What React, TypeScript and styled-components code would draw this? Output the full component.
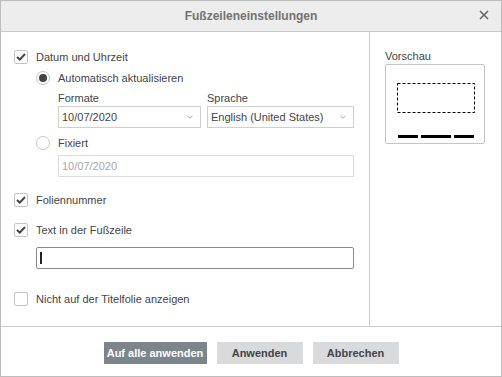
import { FC } from "react";
import styled, { createGlobalStyle } from "styled-components";

const GlobalStyle = createGlobalStyle`
	html, body {
		margin: 0;
		padding: 0;
		background: #ffffff;
	}

	* {
		box-sizing: border-box;
	}
`;

const Chevron: FC = () => (
	<svg width="6" height="4" viewBox="0 0 6 4">
		<path d="M0.5 0.8 L3 3.2 L5.5 0.8" fill="none" stroke="#a8a8a8" strokeWidth="1" />
	</svg>
);

const CheckMark: FC = () => (
	<svg width="10" height="8" viewBox="0 0 10 8">
		<path d="M1 4 L3.8 6.6 L9 1" fill="none" stroke="#444444" strokeWidth="2" />
	</svg>
);

const CheckBox: FC<{ checked?: boolean }> = ({ checked }) => (
	<Box>{checked && <CheckMark />}</Box>
);

const App: FC = () => {
	return (
		<>
			<GlobalStyle />
			<Window>
				<Header>
					<Title>Fußzeileneinstellungen</Title>
					<CloseButton>
						<svg width="10" height="10" viewBox="0 0 10 10">
							<path d="M1 1 L9 9 M9 1 L1 9" stroke="#666666" strokeWidth="1.6" />
						</svg>
					</CloseButton>
				</Header>
				<Main>
					<Settings>
						<Row>
							<CheckBox checked />
							<Label>Datum und Uhrzeit</Label>
						</Row>
						<Row $indent={22} $top={7}>
							<Radio $selected />
							<Label>Automatisch aktualisieren</Label>
						</Row>
						<Fields>
							<Field>
								<Caption>Formate</Caption>
								<Select $width={143}>
									<span>10/07/2020</span>
									<Chevron />
								</Select>
							</Field>
							<Field>
								<Caption>Sprache</Caption>
								<Select $width={147}>
									<span>English (United States)</span>
									<Chevron />
								</Select>
							</Field>
						</Fields>
						<Row $indent={22} $top={8}>
							<Radio />
							<Label>Fixiert</Label>
						</Row>
						<DisabledInput>10/07/2020</DisabledInput>
						<Row $top={16}>
							<CheckBox checked />
							<Label>Foliennummer</Label>
						</Row>
						<Row $top={16}>
							<CheckBox checked />
							<Label>Text in der Fußzeile</Label>
						</Row>
						<TextInput>
							<Caret />
						</TextInput>
						<Row $top={23}>
							<CheckBox />
							<Label>Nicht auf der Titelfolie anzeigen</Label>
						</Row>
					</Settings>
					<Preview>
						<Caption>Vorschau</Caption>
						<PreviewBox>
							<svg width="98" height="78" viewBox="0 0 98 78">
								<rect
									x="11.5"
									y="18.5"
									width="77"
									height="29"
									fill="none"
									stroke="#000000"
									strokeWidth="1"
									strokeDasharray="3 2"
								/>
								<rect x="12" y="70" width="20" height="3" fill="#000000" />
								<rect x="35" y="70" width="30" height="3" fill="#000000" />
								<rect x="68" y="70" width="20" height="3" fill="#000000" />
							</svg>
						</PreviewBox>
					</Preview>
				</Main>
				<Footer>
					<Button $primary>Auf alle anwenden</Button>
					<Button>Anwenden</Button>
					<Button>Abbrechen</Button>
				</Footer>
			</Window>
		</>
	);
};

export default App;

const Window = styled.div`
	width: 502px;
	height: 377px;
	display: flex;
	flex-direction: column;
	border: 1px solid #bdbdbd;
	background: #ffffff;
	font-family: "Liberation Sans", Arial, sans-serif;
	font-size: 11px;
	color: #444444;
`;

const Header = styled.div`
	position: relative;
	display: flex;
	align-items: center;
	justify-content: center;
	height: 31px;
	flex-shrink: 0;
	background: #ededed;
	border-bottom: 1px solid #cbcbcb;
`;

const Title = styled.div`
	font-size: 12px;
	font-weight: bold;
	color: #737373;
`;

const CloseButton = styled.div`
	position: absolute;
	right: 12px;
	top: 9px;
	display: flex;
`;

const Main = styled.div`
	display: flex;
	height: 295px;
	border-bottom: 1px solid #cbcbcb;
`;

const Settings = styled.div`
	width: 369px;
	padding: 18px 0 0 13px;
	border-right: 1px solid #cbcbcb;
	display: flex;
	flex-direction: column;
`;

const Row = styled.div<{ $indent?: number; $top?: number }>`
	display: flex;
	align-items: center;
	gap: 8px;
	height: 14px;
	margin-left: ${(p) => p.$indent ?? 0}px;
	margin-top: ${(p) => p.$top ?? 0}px;
`;

const Label = styled.span`
	line-height: 14px;
	white-space: nowrap;
`;

const Box = styled.div`
	width: 14px;
	height: 14px;
	border: 1px solid #c4c4c4;
	border-radius: 2px;
	display: flex;
	align-items: center;
	justify-content: center;
	background: #ffffff;
`;

const Radio = styled.div<{ $selected?: boolean }>`
	width: 14px;
	height: 14px;
	border-radius: 50%;
	border: 1px solid #c4c4c4;
	display: flex;
	align-items: center;
	justify-content: center;

	&::after {
		content: "";
		display: ${(p) => (p.$selected ? "block" : "none")};
		width: 8px;
		height: 8px;
		border-radius: 50%;
		background: #444444;
	}
`;

const Fields = styled.div`
	display: flex;
	gap: 6px;
	margin: 7px 0 0 44px;
`;

const Field = styled.div`
	display: flex;
	flex-direction: column;
`;

const Caption = styled.div`
	height: 13px;
	line-height: 13px;
	margin-bottom: 1px;
	white-space: nowrap;
`;

const Select = styled.div<{ $width: number }>`
	width: ${(p) => p.$width}px;
	height: 22px;
	border: 1px solid #cfcfcf;
	display: flex;
	align-items: center;
	justify-content: space-between;
	padding: 0 7px 0 3px;
	color: #444444;
`;

const DisabledInput = styled.div`
	width: 296px;
	height: 22px;
	margin: 5px 0 0 44px;
	border: 1px solid #dcdcdc;
	display: flex;
	align-items: center;
	padding-left: 3px;
	color: #a8a8a8;
`;

const TextInput = styled.div`
	width: 318px;
	height: 22px;
	margin: 10px 0 0 22px;
	border: 1px solid #8a8a8a;
	border-radius: 2px;
	display: flex;
	align-items: center;
	padding-left: 3px;
`;

const Caret = styled.div`
	width: 2px;
	height: 12px;
	background: #222222;
`;

const Preview = styled.div`
	flex: 1;
	padding: 18px 0 0 15px;
	display: flex;
	flex-direction: column;
`;

const PreviewBox = styled.div`
	width: 100px;
	height: 80px;
	border: 1px solid #c4c4c4;
	border-radius: 2px;
	display: flex;
`;

const Footer = styled.div`
	flex: 1;
	display: flex;
	justify-content: center;
	align-items: flex-start;
	gap: 10px;
	padding-top: 15px;
`;

const Button = styled.div<{ $primary?: boolean }>`
	width: ${(p) => (p.$primary ? 103 : 86)}px;
	height: 22px;
	display: flex;
	align-items: center;
	justify-content: center;
	font-weight: bold;
	font-size: 11px;
	background: ${(p) => (p.$primary ? "#7d858c" : "#d8dadc")};
	color: ${(p) => (p.$primary ? "#ffffff" : "#444444")};
`;
